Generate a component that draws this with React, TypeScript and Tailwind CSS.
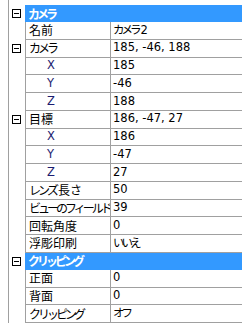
import React from 'react';

type Row =
  | { kind: 'header'; label: string }
  | { kind: 'item'; label: string; value: string; sub?: boolean; toggle?: boolean };

const rows: Row[] = [
  { kind: 'header', label: 'カメラ' },
  { kind: 'item', label: '名前', value: 'カメラ2' },
  { kind: 'item', label: 'カメラ', value: '185, -46, 188', toggle: true },
  { kind: 'item', label: 'X', value: '185', sub: true },
  { kind: 'item', label: 'Y', value: '-46', sub: true },
  { kind: 'item', label: 'Z', value: '188', sub: true },
  { kind: 'item', label: '目標', value: '186, -47, 27', toggle: true },
  { kind: 'item', label: 'X', value: '186', sub: true },
  { kind: 'item', label: 'Y', value: '-47', sub: true },
  { kind: 'item', label: 'Z', value: '27', sub: true },
  { kind: 'item', label: 'レンズ長さ', value: '50' },
  { kind: 'item', label: 'ビューのフィールド', value: '39' },
  { kind: 'item', label: '回転角度', value: '0' },
  { kind: 'item', label: '浮彫印刷', value: 'いいえ' },
  { kind: 'header', label: 'クリッピング' },
  { kind: 'item', label: '正面', value: '0' },
  { kind: 'item', label: '背面', value: '0' },
  { kind: 'item', label: 'クリッピング', value: 'オフ' },
];

// kana in the reference font are much narrower than full width
function Jp({ text }: { text: string }) {
  const parts = text.match(/[\u3040-\u30ff]+|[^\u3040-\u30ff]+/g) ?? [];
  return (
    <>
      {parts.map((p, i) => {
        if (!/[\u3040-\u30ff]/.test(p)) return <span key={i}>{p}</span>;
        const last = i === parts.length - 1;
        return last ? (
          <span key={i} className="tracking-[-3px]">
            {p}
          </span>
        ) : (
          <span key={i}>
            <span className="tracking-[-3px]">{p.slice(0, -1)}</span>
            <span className="tracking-[-1px]">{p.slice(-1)}</span>
          </span>
        );
      })}
    </>
  );
}

function Toggle() {
  return (
    <div className="w-[9px] h-[9px] border border-black flex items-center justify-center bg-white">
      <div className="w-[5px] h-px bg-black" />
    </div>
  );
}

function Gutter({ toggle }: { toggle?: boolean }) {
  return (
    <div className="w-[25px] shrink-0 h-full pl-[8px]">
      <div className="h-full border-l border-[#a0a0a0] pl-[3px] flex items-center">
        {toggle && <Toggle />}
      </div>
    </div>
  );
}

const jp = "font-['Noto_Sans_CJK_JP',sans-serif]";
const num = "font-['DejaVu_Sans','Noto_Sans_CJK_JP',sans-serif]";

export default function App() {
  return (
    <div className="w-[242px] h-[324px] bg-white overflow-hidden text-black">
      <div className="h-[5px] flex">
        <Gutter />
      </div>
      {rows.map((row, i) =>
        row.kind === 'header' ? (
          <div key={i} className="h-[17px] flex">
            <Gutter toggle />
            <div
              className={`flex-1 bg-[#3399ff] text-white font-bold text-[12px] pl-[3px] flex items-center ${jp}`}
            >
              <Jp text={row.label} />
            </div>
          </div>
        ) : (
          <div key={i} className="h-[17.75px] flex">
            <Gutter toggle={row.toggle} />
            <div
              className={`w-[86px] shrink-0 border-l border-r border-b border-[#a0a0a0] flex items-center leading-none whitespace-nowrap overflow-hidden ${
                row.sub ? `pl-[21px] ${num} text-[11.5px] text-[#1c1c70]` : `pl-[3px] text-[12px] ${jp}`
              }`}
            >
              <Jp text={row.label} />
            </div>
            <div
              className={`flex-1 border-b border-[#a0a0a0] flex items-center pl-[2px] text-[11.5px] leading-none whitespace-nowrap ${num}`}
            >
              <Jp text={row.value} />
            </div>
          </div>
        )
      )}
    </div>
  );
}
